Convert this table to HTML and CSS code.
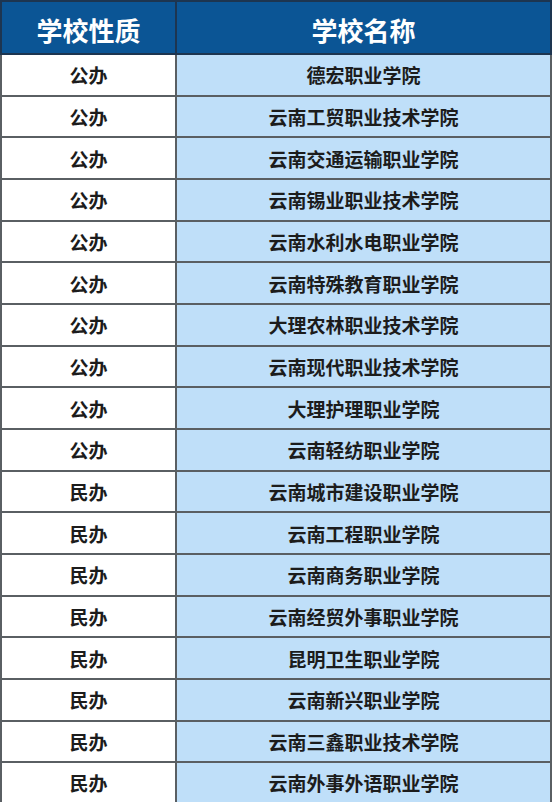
FILE: index.html
```html
<!DOCTYPE html>
<html lang="zh-CN">
<head>
<meta charset="utf-8">
<title>学校名单</title>
<link rel="stylesheet" href="styles.css">
</head>
<body>
<table class="schools">
  <thead>
    <tr><th class="col-type">学校性质</th><th class="col-name">学校名称</th></tr>
  </thead>
  <tbody>
    <tr><td class="type">公办</td><td class="name">德宏职业学院</td></tr>
    <tr><td class="type">公办</td><td class="name">云南工贸职业技术学院</td></tr>
    <tr><td class="type">公办</td><td class="name">云南交通运输职业学院</td></tr>
    <tr><td class="type">公办</td><td class="name">云南锡业职业技术学院</td></tr>
    <tr><td class="type">公办</td><td class="name">云南水利水电职业学院</td></tr>
    <tr><td class="type">公办</td><td class="name">云南特殊教育职业学院</td></tr>
    <tr><td class="type">公办</td><td class="name">大理农林职业技术学院</td></tr>
    <tr><td class="type">公办</td><td class="name">云南现代职业技术学院</td></tr>
    <tr><td class="type">公办</td><td class="name">大理护理职业学院</td></tr>
    <tr><td class="type">公办</td><td class="name">云南轻纺职业学院</td></tr>
    <tr><td class="type">民办</td><td class="name">云南城市建设职业学院</td></tr>
    <tr><td class="type">民办</td><td class="name">云南工程职业学院</td></tr>
    <tr><td class="type">民办</td><td class="name">云南商务职业学院</td></tr>
    <tr><td class="type">民办</td><td class="name">云南经贸外事职业学院</td></tr>
    <tr><td class="type">民办</td><td class="name">昆明卫生职业学院</td></tr>
    <tr><td class="type">民办</td><td class="name">云南新兴职业学院</td></tr>
    <tr><td class="type">民办</td><td class="name">云南三鑫职业技术学院</td></tr>
    <tr><td class="type">民办</td><td class="name">云南外事外语职业学院</td></tr>
  </tbody>
</table>
</body>
</html>
```

FILE: styles.css
```css
html, body {
  margin: 0;
  padding: 0;
  background: #ffffff;
}

body {
  font-family: "Noto Sans CJK SC", "Noto Sans", sans-serif;
  color: #1c1c1c;
}

.schools {
  width: 552px;
  border-collapse: collapse;
  table-layout: fixed;
  border: 2px solid #2f3a44;
}

.schools th,
.schools td {
  border: 2px solid #5a5f63;
  padding: 0;
  text-align: center;
  vertical-align: middle;
}

.schools thead tr {
  height: 53px;
}

.schools th {
  background: #0b5595;
  color: #ffffff;
  font-size: 26px;
  font-weight: 700;
  line-height: 1;
  padding-top: 4px;
  border-color: #1d3550;
}

.col-type {
  width: 173px;
}

.schools tbody tr {
  height: 41.67px;
}

.schools td {
  font-size: 19px;
  font-weight: 700;
  line-height: 1;
}

.type {
  background: #ffffff;
}

.name {
  background: #bfdff9;
}
```
